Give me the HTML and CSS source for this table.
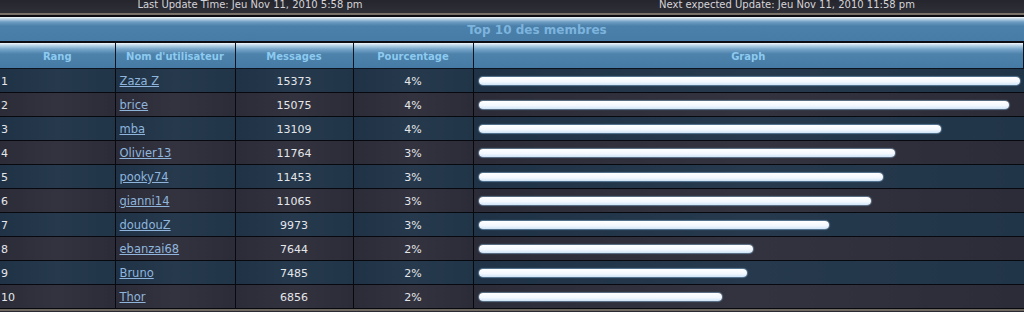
FILE: index.html
```html
<!DOCTYPE html>
<html>
<head>
<meta charset="utf-8">
<link rel="stylesheet" href="styles.css">
</head>
<body>
<div class="topbar">
  <div class="upd upd-left">Last Update Time: Jeu Nov 11, 2010 5:58 pm</div>
  <div class="upd upd-right">Next expected Update: Jeu Nov 11, 2010 11:58 pm</div>
</div>
<div class="sep"></div>
<div class="title">Top 10 des membres</div>
<table class="stats">
  <colgroup>
    <col class="c-rank"><col class="c-user"><col class="c-msg"><col class="c-pct"><col class="c-graph">
  </colgroup>
  <thead>
    <tr><th>Rang</th><th>Nom d'utilisateur</th><th>Messages</th><th>Pourcentage</th><th>Graph</th></tr>
  </thead>
  <tbody>
    <tr class="odd"><td class="rank">1</td><td class="user"><a href="#">Zaza Z</a></td><td class="num">15373</td><td class="num">4%</td><td class="graph"><div class="bar" style="width:541px"></div></td></tr>
    <tr class="even"><td class="rank">2</td><td class="user"><a href="#">brice</a></td><td class="num">15075</td><td class="num">4%</td><td class="graph"><div class="bar" style="width:530px"></div></td></tr>
    <tr class="odd"><td class="rank">3</td><td class="user"><a href="#">mba</a></td><td class="num">13109</td><td class="num">4%</td><td class="graph"><div class="bar" style="width:462px"></div></td></tr>
    <tr class="even"><td class="rank">4</td><td class="user"><a href="#">Olivier13</a></td><td class="num">11764</td><td class="num">3%</td><td class="graph"><div class="bar" style="width:416px"></div></td></tr>
    <tr class="odd"><td class="rank">5</td><td class="user"><a href="#">pooky74</a></td><td class="num">11453</td><td class="num">3%</td><td class="graph"><div class="bar" style="width:404px"></div></td></tr>
    <tr class="even"><td class="rank">6</td><td class="user"><a href="#">gianni14</a></td><td class="num">11065</td><td class="num">3%</td><td class="graph"><div class="bar" style="width:392px"></div></td></tr>
    <tr class="odd"><td class="rank">7</td><td class="user"><a href="#">doudouZ</a></td><td class="num">9973</td><td class="num">3%</td><td class="graph"><div class="bar" style="width:350px"></div></td></tr>
    <tr class="even"><td class="rank">8</td><td class="user"><a href="#">ebanzai68</a></td><td class="num">7644</td><td class="num">2%</td><td class="graph"><div class="bar" style="width:274px"></div></td></tr>
    <tr class="odd"><td class="rank">9</td><td class="user"><a href="#">Bruno</a></td><td class="num">7485</td><td class="num">2%</td><td class="graph"><div class="bar" style="width:268px"></div></td></tr>
    <tr class="even"><td class="rank">10</td><td class="user"><a href="#">Thor</a></td><td class="num">6856</td><td class="num">2%</td><td class="graph"><div class="bar" style="width:243px"></div></td></tr>
  </tbody>
</table>
<div class="bottom"></div>
</body>
</html>
```

FILE: styles.css
```css
html, body {
  margin: 0;
  padding: 0;
  background: #2a2a33;
  font-family: "DejaVu Sans", Verdana, sans-serif;
  overflow: hidden;
}
.topbar {
  height: 13px;
  display: grid;
  grid-template-columns: 500px 1fr;
  background: linear-gradient(#25252d, #2f2f38);
  color: #d4d4d8;
  font-size: 10px;
  line-height: 10px;
}
.upd { text-align: center; }
.upd-right { padding-left: 50px; }
.sep {
  height: 2px;
  background: #7a7268;
  border-bottom: 2px solid #0c0c10;
}
.title {
  height: 24px;
  line-height: 26px;
  text-align: center;
  padding-left: 50px;
  font-size: 12px;
  font-weight: bold;
  color: #7db4de;
  background: linear-gradient(#f4f8fb 0px, #b9d2e6 2px, #6d9cc2 5px, #4b80aa 9px, #467ca6 24px);
  border-bottom: 2px solid #0c0c12;
}
.stats {
  width: 1024px;
  border-collapse: collapse;
  table-layout: fixed;
  font-size: 11px;
}
.c-rank { width: 115px; }
.c-user { width: 120px; }
.c-msg { width: 118px; }
.c-pct { width: 120px; }
.stats th {
  height: 24px;
  padding: 1px 0 0 0;
  font-weight: bold;
  font-size: 10px;
  color: #8ccaf0;
  background: linear-gradient(#f6f9fc 0px, #c2d9ea 2px, #78a6ca 6px, #4d82ab 11px, #467ba5 24px);
  border-left: 1px solid #0d1420;
  border-right: 1px solid #0d1420;
  border-bottom: 1px solid #0d1420;
}
.stats th:first-child { border-left: none; }
.stats td {
  height: 22px;
  padding: 1px 0 0 0;
  color: #e4e6ea;
  border: 1px solid #07090e;
  white-space: nowrap;
}
.stats td:first-child { border-left: none; }
.stats td:last-child { border-right: none; }
.odd td { background: linear-gradient(90deg, #1f3246, #26394d 50%, #213549); }
.even td { background: linear-gradient(90deg, #2b2c38, #33333f 50%, #2c2c38); }
.stats td.rank { padding-left: 1px; }
.stats td.user { padding-left: 4px; font-size: 11.5px; }
.user a { color: #8fb5dd; text-decoration: underline; }
.num { text-align: center; }
.stats td.graph { padding: 0 0 0 5px; }
.bar {
  height: 8px;
  border-radius: 4px;
  background: linear-gradient(#ffffff, #f2f8ff 60%, #cfe4f6);
  box-shadow: 0 0 1px 1px rgba(150, 200, 240, 0.45);
}
.bottom {
  height: 2px;
  background: #6e6860;
}
```
